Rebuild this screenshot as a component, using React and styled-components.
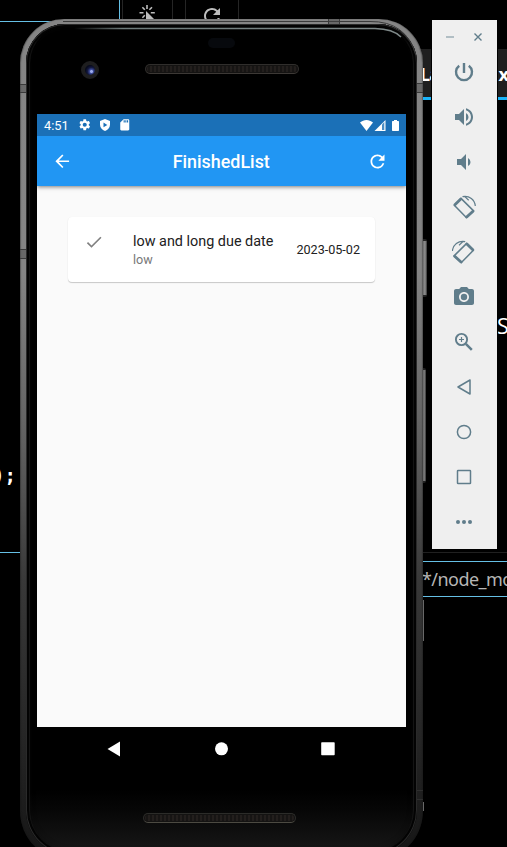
import React from "react";
import styled, { createGlobalStyle } from "styled-components";
import {
  MdArrowBack, MdRefresh, MdSettings, MdSdCard, MdCheck,
  MdVolumeUp, MdVolumeDown, MdCameraAlt,
} from "react-icons/md";

const GlobalStyle = createGlobalStyle`
  * { box-sizing: border-box; }
  body { margin: 0; background: #000; }
`;

const Desktop = styled.main`
  position: relative;
  width: 507px;
  height: 847px;
  overflow: hidden;
  background: #000;
  font-family: Roboto, sans-serif;
`;

/* Pieces of the windows lying behind the emulator */
const Behind = styled.div`
  position: absolute;
  left: ${(p) => p.$x}px;
  top: ${(p) => p.$y}px;
  width: ${(p) => p.$w}px;
  height: ${(p) => p.$h}px;
  overflow: hidden;
`;
const EditorEdge = styled(Behind)`
  border-bottom: 1px solid #65bfe5;
  border-right: ${(p) => (p.$side ? "1px solid #65bfe5" : "0")};
`;
const BrowserButton = styled(Behind)`
  border: solid #252525;
  border-width: 0 1px;
  color: #bdbdbd;
  svg { display: block; margin: 4px auto 0; }
`;
const TabStrip = styled(Behind)`
  display: flex;
  justify-content: space-between;
  background: #1f1f1f;
  border-bottom: 3px solid #1ab4fa;
  color: #fff;
  font: 700 18px/51px "Open Sans", sans-serif;
  letter-spacing: -0.8px;
`;
const CodeText = styled(Behind)`
  display: flex;
  justify-content: flex-end;
  color: #fff;
  font: 700 19px/26px "DejaVu Sans Mono", monospace;
`;
const SideText = styled(Behind)`
  color: #fff;
  font: 400 21.5px/28px "Open Sans", sans-serif;
`;
const FilterField = styled(Behind)`
  border: solid #65bfe5;
  border-width: 1px 0;
  color: #b5b5b5;
  white-space: nowrap;
  font: 400 18px/35px "Noto Sans", sans-serif;
  letter-spacing: -0.55px;
`;
const Rule = styled(Behind)`
  background: #202020;
`;
const ThinKey = styled(Behind)`
  background: #686868;
`;
const SideKey = styled(Behind)`
  border-radius: 0 2px 2px 0;
  background: linear-gradient(90deg, #555, ${(p) => p.$tone} 60%, #333);
  border: solid #222;
  border-width: 2px 0;
`;

const PhoneBody = styled.section`
  position: absolute;
  left: 20px;
  top: 19px;
  width: 403px;
  height: 842px;
  padding: 5px 6px 6px;
  border-radius: 44px 44px 50px 50px;
  background: linear-gradient(#858585, #848484 30%, #606060 50%, #383838 67%, #262626 85%, #151515);
  box-shadow: inset 1px 0 1px rgba(20, 20, 20, 0.35), inset -1px 0 1px rgba(20, 20, 20, 0.35);
`;
const Bezel = styled.div`
  display: flex;
  flex-direction: column;
  height: 100%;
  padding: 0 11px;
  border-radius: 39px 39px 45px 45px;
  background: linear-gradient(#000 0 765px, #060606 785px, #161616 825px);
  box-shadow: inset 0 0 0 1px #2a2a2a, inset 0 0 0 3px #030303,
    inset 4px 0 1px #171717, inset -4px 0 1px #171717, inset 0 0 8px #0b0b0b;
`;
const Antenna = styled(Behind)`
  border: solid #3a3a3a;
  border-width: ${(p) => (p.$upright ? "0 1px" : "1px 0")};
  background: rgba(70, 70, 70, ${(p) => (p.$faint ? 0.1 : 0.45)});
  opacity: ${(p) => (p.$faint ? 0.6 : 1)};
`;
const Shine = styled.svg`
  position: absolute;
  left: 0;
  top: 0;
  pointer-events: none;
`;

const TopBezel = styled.div`
  flex: none;
  height: 90px;
  padding: 14px 107px 0 44px;
  display: grid;
  grid-template-columns: 20px 154px;
  grid-template-rows: 10px 1fr;
  justify-content: space-between;
`;
const Sensor = styled.div`
  grid-column: 1 / 3;
  justify-self: end;
  width: 27px;
  height: 10px;
  margin-right: 64px;
  border-radius: 5px;
  background: #07090d;
`;
const Camera = styled.div`
  width: 18px;
  height: 18px;
  margin-top: 13px;
  border: 4px solid #1e1e1f;
  border-radius: 50%;
  background: radial-gradient(circle at 65% 65%, #9cabed 0 1px, #3c4b99 2px, #141941 4px, #080b1d 6px);
`;
const Speaker = styled.div`
  width: 154px;
  height: 10px;
  margin-top: 16px;
  border: 1px solid #302e2c;
  border-bottom-color: #3d3936;
  border-radius: 5px;
  background: repeating-linear-gradient(90deg, #231f1d 0 2px, #171514 2px 4px);
  box-shadow: inset 0 0 0 1px #141312;
`;
const BottomSpeaker = styled(Speaker)`
  width: 153px;
  margin: 43px 0 0 106px;
  border-color: #2c2c29;
  border-bottom-color: #4c4a42;
`;

const Screen = styled.div`
  flex: none;
  width: 369px;
  height: 613px;
  background: #fafafa;
  display: flex;
  flex-direction: column;
`;
const StatusBar = styled.div`
  display: flex;
  align-items: center;
  height: 22px;
  padding: 0 7px;
  background: #1b70b7;
  color: #fff;
  font-size: 12.8px;
  line-height: 22px;
  svg { flex: none; }
`;
const Clock = styled.span`
  width: 34px;
  padding-top: 1px;
`;
const Notices = styled.div`
  display: flex;
  align-items: center;
  gap: 7px;
  flex: 1;
`;
const Signals = styled.div`
  display: flex;
  align-items: center;
`;
const BatterySlot = styled.span`
  display: flex;
  margin-left: 6px;
`;
const AppBar = styled.header`
  display: flex;
  align-items: center;
  justify-content: space-between;
  height: 50px;
  flex: none;
  padding: 0 18px 0 15px;
  background: #2196f3;
  color: #fff;
  box-shadow: 0 1px 4px rgba(0, 0, 0, 0.5);
  clip-path: inset(0 0 -8px 0);
`;
const Title = styled.h1`
  margin: 0;
  padding: 1px 0 0 3px;
  font-size: 17.9px;
  font-weight: 500;
  line-height: 24px;
`;
const Card = styled.article`
  display: flex;
  align-items: center;
  height: 65px;
  margin: 31px 31px 0;
  padding: 0 15px 0 16px;
  border-radius: 4px;
  background: #fff;
  box-shadow: 0 1px 1px rgba(0, 0, 0, 0.2), 0 0 1px rgba(0, 0, 0, 0.06);
  color: #212121;
  svg { align-self: flex-start; margin-top: 15px; color: #808080; }
`;
const Labels = styled.div`
  flex: 1;
  margin-left: 29px;
  padding-top: 1px;
`;
const TaskName = styled.div`
  font-size: 14.4px;
  line-height: 19px;
  white-space: nowrap;
`;
const Priority = styled.div`
  color: #777;
  font-size: 12.6px;
  line-height: 18px;
`;
const DueDate = styled.time`
  font-size: 12.6px;
  line-height: 18px;
  padding-top: 1px;
  white-space: nowrap;
`;
const AndroidNav = styled.nav`
  display: flex;
  flex: none;
  justify-content: space-between;
  align-items: center;
  height: 43px;
  padding: 0 71px 0 70px;
`;

const ToolPanel = styled.aside`
  position: absolute;
  left: 431px;
  top: 20px;
  width: 67px;
  height: 529px;
  border: solid #000;
  border-width: 0 1px;
  background: #efefef;
  color: #607d8b;
  display: flex;
  flex-direction: column;
`;
const WindowControls = styled.div`
  display: flex;
  flex: none;
  height: 29px;
  padding: 13px 15px 0 14px;
  justify-content: space-between;
`;
const ToolButton = styled.button`
  display: flex;
  align-items: center;
  justify-content: center;
  flex: none;
  height: 45px;
  width: 64px;
  padding: 0;
  border: 0;
  background: none;
  color: inherit;
`;

const ClickIcon = () => (
  <svg width="20" height="20" viewBox="0 0 20 20" fill="none" stroke="currentColor" strokeWidth="1.6">
    <path d="M9 1v4M4.400 3.200l2.400 2.600M14 3.200l-2.600 2.600M1.500 8.800h4M12.800 8.800h4M4.400 13.700l2.400-2.400" />
    <path d="m8 7 8 8h-4l2 4h-3l-3-3z" fill="currentColor" stroke="none" />
  </svg>
);
const ShieldIcon = () => (
  <svg width="12" height="12" viewBox="0 0 12 12">
    <path d="M6 0 11 2v3.400c0 3-2.100 5.500-5 6.600-2.900-1.100-5-3.600-5-6.600V2z" fill="#fff" />
    <path d="m4.500 3.500 3.800 2.400-3.800 2.400z" fill="#1b70b7" />
  </svg>
);
const WifiIcon = () => (
  <svg width="13" height="11" viewBox="0 0 13 11">
    <path d="M0 2.600C4-.8 9-.8 13 2.600L6.500 11z" fill="currentColor" />
  </svg>
);
const CellIcon = () => (
  <svg width="13" height="11" viewBox="0 0 13 11">
    <path d="M1.500 11 12.500 0v11z" fill="currentColor" />
    <path d="M9 4.500 11.300 2v8H9z" fill="#1b70b7" opacity=".8" />
  </svg>
);
const BatteryIcon = () => (
  <svg width="7" height="11" viewBox="0 0 7 11">
    <path d="M2 0h3v1h1.300q.7 0 .7.7v8.600q0 .7-.7.7H.7Q0 11 0 10.300V1.700Q0 1 .7 1H2z" fill="currentColor" />
  </svg>
);
const PowerIcon = () => (
  <svg width="24" height="24" viewBox="0 0 24 24" fill="none" stroke="currentColor" strokeWidth="2.400">
    <path d="M12 3v10M7.200 5.700A8 8 0 1 0 16.800 5.700" />
  </svg>
);
const ZoomIcon = () => (
  <svg width="24" height="24" viewBox="0 0 24 24" fill="none" stroke="currentColor">
    <circle cx="9.500" cy="9.500" r="5.600" strokeWidth="1.900" />
    <path d="m13.800 13.800 6 6" strokeWidth="2.500" />
    <path d="M9.500 7v5M7 9.500h5" strokeWidth="1.200" />
  </svg>
);
const RotateIcon = ({ right }) => (
  <svg width="24" height="26" viewBox="0 -1 24 26" fill="none" stroke="currentColor">
    <g transform={right ? "translate(23.700 0) scale(-1 1)" : undefined}>
      <path d="M9 3.400 21.600 15.900 14.300 22.500 2.300 10.300z" strokeWidth="1.500" strokeLinejoin="round" />
      <path d="m2.900 9.700 5.900-5.700M14.700 22.100l6.300-5.900" strokeWidth="2.800" strokeLinecap="round" />
      <path d="M10.500 1.600C17.500.2 22.800 5 23.300 11M12.500 1.400l4.200 3.800" strokeWidth="1.200" />
    </g>
  </svg>
);
const outline = { fill: "none", stroke: "currentColor", strokeWidth: 1.5, strokeLinejoin: "round" };

const tools = [
  ["Power", <PowerIcon />],
  ["Volume up", <MdVolumeUp size={24} />],
  ["Volume down", <MdVolumeDown size={24} />],
  ["Rotate left", <RotateIcon />],
  ["Rotate right", <RotateIcon right />],
  ["Screenshot", <MdCameraAlt size={24} />],
  ["Zoom", <ZoomIcon />],
  ["Back", <svg width="16" height="16" viewBox="0 0 16 16" {...outline}><path d="M14 1v14L2 8z" /></svg>],
  ["Home", <svg width="16" height="16" viewBox="0 0 16 16" {...outline}><circle cx="8" cy="8" r="6.600" /></svg>],
  ["Overview", <svg width="16" height="16" viewBox="0 0 16 16" {...outline}><rect x="1.500" y="1.500" width="13" height="13" rx=".6" /></svg>],
  ["More", <svg width="16" height="4" viewBox="0 0 16 4" fill="currentColor"><circle cx="2" cy="2" r="2" /><circle cx="8" cy="2" r="2" /><circle cx="14" cy="2" r="2" /></svg>],
];

function Phone() {
  return (
    <PhoneBody>
      <Bezel>
        <TopBezel>
          <Sensor />
          <Camera />
          <Speaker />
        </TopBezel>
        <Screen>
          <StatusBar>
            <Clock>4:51</Clock>
            <Notices>
              <MdSettings size={13.5} />
              <ShieldIcon />
              <MdSdCard size={13.5} />
            </Notices>
            <Signals>
              <WifiIcon />
              <CellIcon />
              <BatterySlot><BatteryIcon /></BatterySlot>
            </Signals>
          </StatusBar>
          <AppBar>
            <MdArrowBack size={20.5} />
            <Title>FinishedList</Title>
            <MdRefresh size={21} />
          </AppBar>
          <Card>
            <MdCheck size={20} />
            <Labels>
              <TaskName>low and long due date</TaskName>
              <Priority>low</Priority>
            </Labels>
            <DueDate>2023-05-02</DueDate>
          </Card>
        </Screen>
        <AndroidNav>
          <svg width="14" height="16" viewBox="0 0 14 16" fill="#fff"><path d="M13 .5v15L.5 8z" /></svg>
          <svg width="14" height="14" viewBox="0 0 14 14" fill="#fff"><circle cx="7.500" cy="6.800" r="6.500" /></svg>
          <svg width="14" height="14" viewBox="0 0 14 14" fill="#fff"><rect x=".2" y=".2" width="13.500" height="13" rx=".7" /></svg>
        </AndroidNav>
        <BottomSpeaker />
      </Bezel>
      <Shine width="403" height="60">
        <defs>
          <linearGradient id="glass">
            <stop offset="0" stopColor="#7e8b8b" stopOpacity="0" />
            <stop offset=".15" stopColor="#6e7b7b" />
            <stop offset="1" stopColor="#7f8989" />
          </linearGradient>
        </defs>
        <path d="M43 2.500H350Q386 2 396 36" fill="none" stroke="#3a3a3a" />
        <path d="M54 9.500 355 9.600Q373 10 381 18" fill="none" stroke="url(#glass)" strokeWidth="1.500" />
      </Shine>
      <Antenna $x={0} $y={65} $w={6} $h={9} />
      <Antenna $x={0} $y={230} $w={6} $h={10} />
      <Antenna $x={397} $y={64} $w={6} $h={10} />
      <Antenna $x={397} $y={771} $w={6} $h={10} $faint />
      <Antenna $x={308} $y={0} $w={12} $h={5} $upright />
    </PhoneBody>
  );
}

export default function App() {
  return (
    <Desktop>
      <GlobalStyle />
      <EditorEdge $x={0} $y={0} $w={120} $h={22} $side />
      <BrowserButton $x={122} $y={0} $w={51} $h={22}><ClickIcon /></BrowserButton>
      <BrowserButton $x={185} $y={0} $w={54} $h={22}><MdRefresh size={24} /></BrowserButton>
      <TabStrip $x={420} $y={49} $w={88} $h={51}><span>La</span><span>x</span></TabStrip>
      <SideText $x={497} $y={312} $w={10} $h={30}>S</SideText>
      <CodeText $x={-8} $y={462} $w={24} $h={30}>);</CodeText>
      <EditorEdge $x={0} $y={540} $w={24} $h={13} />
      <Rule $x={420} $y={552} $w={87} $h={1} />
      <FilterField $x={422} $y={561} $w={85} $h={36}>*/node_mo</FilterField>
      <SideKey $x={422} $y={239} $w={5} $h={58} $tone="#929292" />
      <SideKey $x={422} $y={368} $w={4} $h={115} $tone="#7a7a7a" />
      <ThinKey $x={423} $y={600} $w={1} $h={41} />
      <ThinKey $x={423} $y={802} $w={1} $h={9} />
      <Phone />
      <ToolPanel>
        <WindowControls>
          <svg width="8" height="8"><path d="M0 4h8" stroke="#9caeb6" strokeWidth="1.500" /></svg>
          <svg width="8" height="8"><path d="m.5.5 7 7m0-7-7 7" stroke="currentColor" strokeWidth="1.400" /></svg>
        </WindowControls>
        {tools.map(([name, icon]) => (
          <ToolButton key={name} aria-label={name}>{icon}</ToolButton>
        ))}
      </ToolPanel>
    </Desktop>
  );
}
